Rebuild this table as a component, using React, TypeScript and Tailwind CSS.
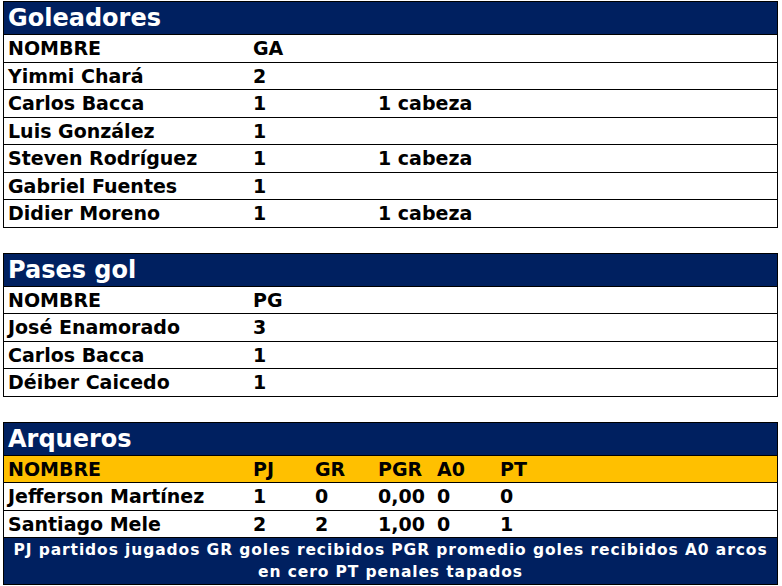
import React from "react";

const cols = "grid grid-cols-[245px_62px_63px_59px_63px_1fr]";

type Row = string[];

function Title({ text }: { text: string }) {
  return (
    <div className="h-[32px] bg-[#002060] text-white text-[24px] leading-[32px] pl-[4px]">
      {text}
    </div>
  );
}

function DataRow({ cells, yellow }: { cells: Row; yellow?: boolean }) {
  return (
    <div
      className={`${cols} h-[27.5px] border-t border-black items-center text-[19px] leading-[26px] ${
        yellow ? "bg-[#ffc000]" : "bg-white"
      }`}
    >
      {[0, 1, 2, 3, 4, 5].map((i) => (
        <div key={i} className="pl-[4px] whitespace-nowrap">
          {cells[i] ?? ""}
        </div>
      ))}
    </div>
  );
}

function Table({ title, rows, yellowHeader, footer }: { title: string; rows: Row[]; yellowHeader?: boolean; footer?: React.ReactNode }) {
  return (
    <div className="border border-black">
      <Title text={title} />
      {rows.map((r, i) => (
        <DataRow key={i} cells={r} yellow={yellowHeader && i === 0} />
      ))}
      {footer}
    </div>
  );
}

export default function App() {
  return (
    <div
      className="w-[782px] h-[586px] bg-white pl-[3px] pr-[4px] pt-[1px] font-bold text-black"
      style={{ fontFamily: '"DejaVu Sans", Verdana, sans-serif' }}
    >
      <Table
        title="Goleadores"
        rows={[
          ["NOMBRE", "GA"],
          ["Yimmi Chará", "2"],
          ["Carlos Bacca", "1", "", "1 cabeza"],
          ["Luis González", "1"],
          ["Steven Rodríguez", "1", "", "1 cabeza"],
          ["Gabriel Fuentes", "1"],
          ["Didier Moreno", "1", "", "1 cabeza"],
        ]}
      />
      <div className="mt-[25px]">
        <Table
          title="Pases gol"
          rows={[
            ["NOMBRE", "PG"],
            ["José Enamorado", "3"],
            ["Carlos Bacca", "1"],
            ["Déiber Caicedo", "1"],
          ]}
        />
      </div>
      <div className="mt-[25px]">
        <Table
          title="Arqueros"
          yellowHeader
          rows={[
            ["NOMBRE", "PJ", "GR", "PGR", "A0", "PT"],
            ["Jefferson Martínez", "1", "0", "0,00", "0", "0"],
            ["Santiago Mele", "2", "2", "1,00", "0", "1"],
          ]}
          footer={
            <div className="border-t border-black bg-[#002060] text-white text-[15.5px] leading-[22px] text-center h-[47px] pt-[1px] tracking-[0.9px] whitespace-nowrap">
              PJ partidos jugados GR goles recibidos PGR promedio goles recibidos A0 arcos
              <br />
              en cero PT penales tapados
            </div>
          }
        />
      </div>
    </div>
  );
}
